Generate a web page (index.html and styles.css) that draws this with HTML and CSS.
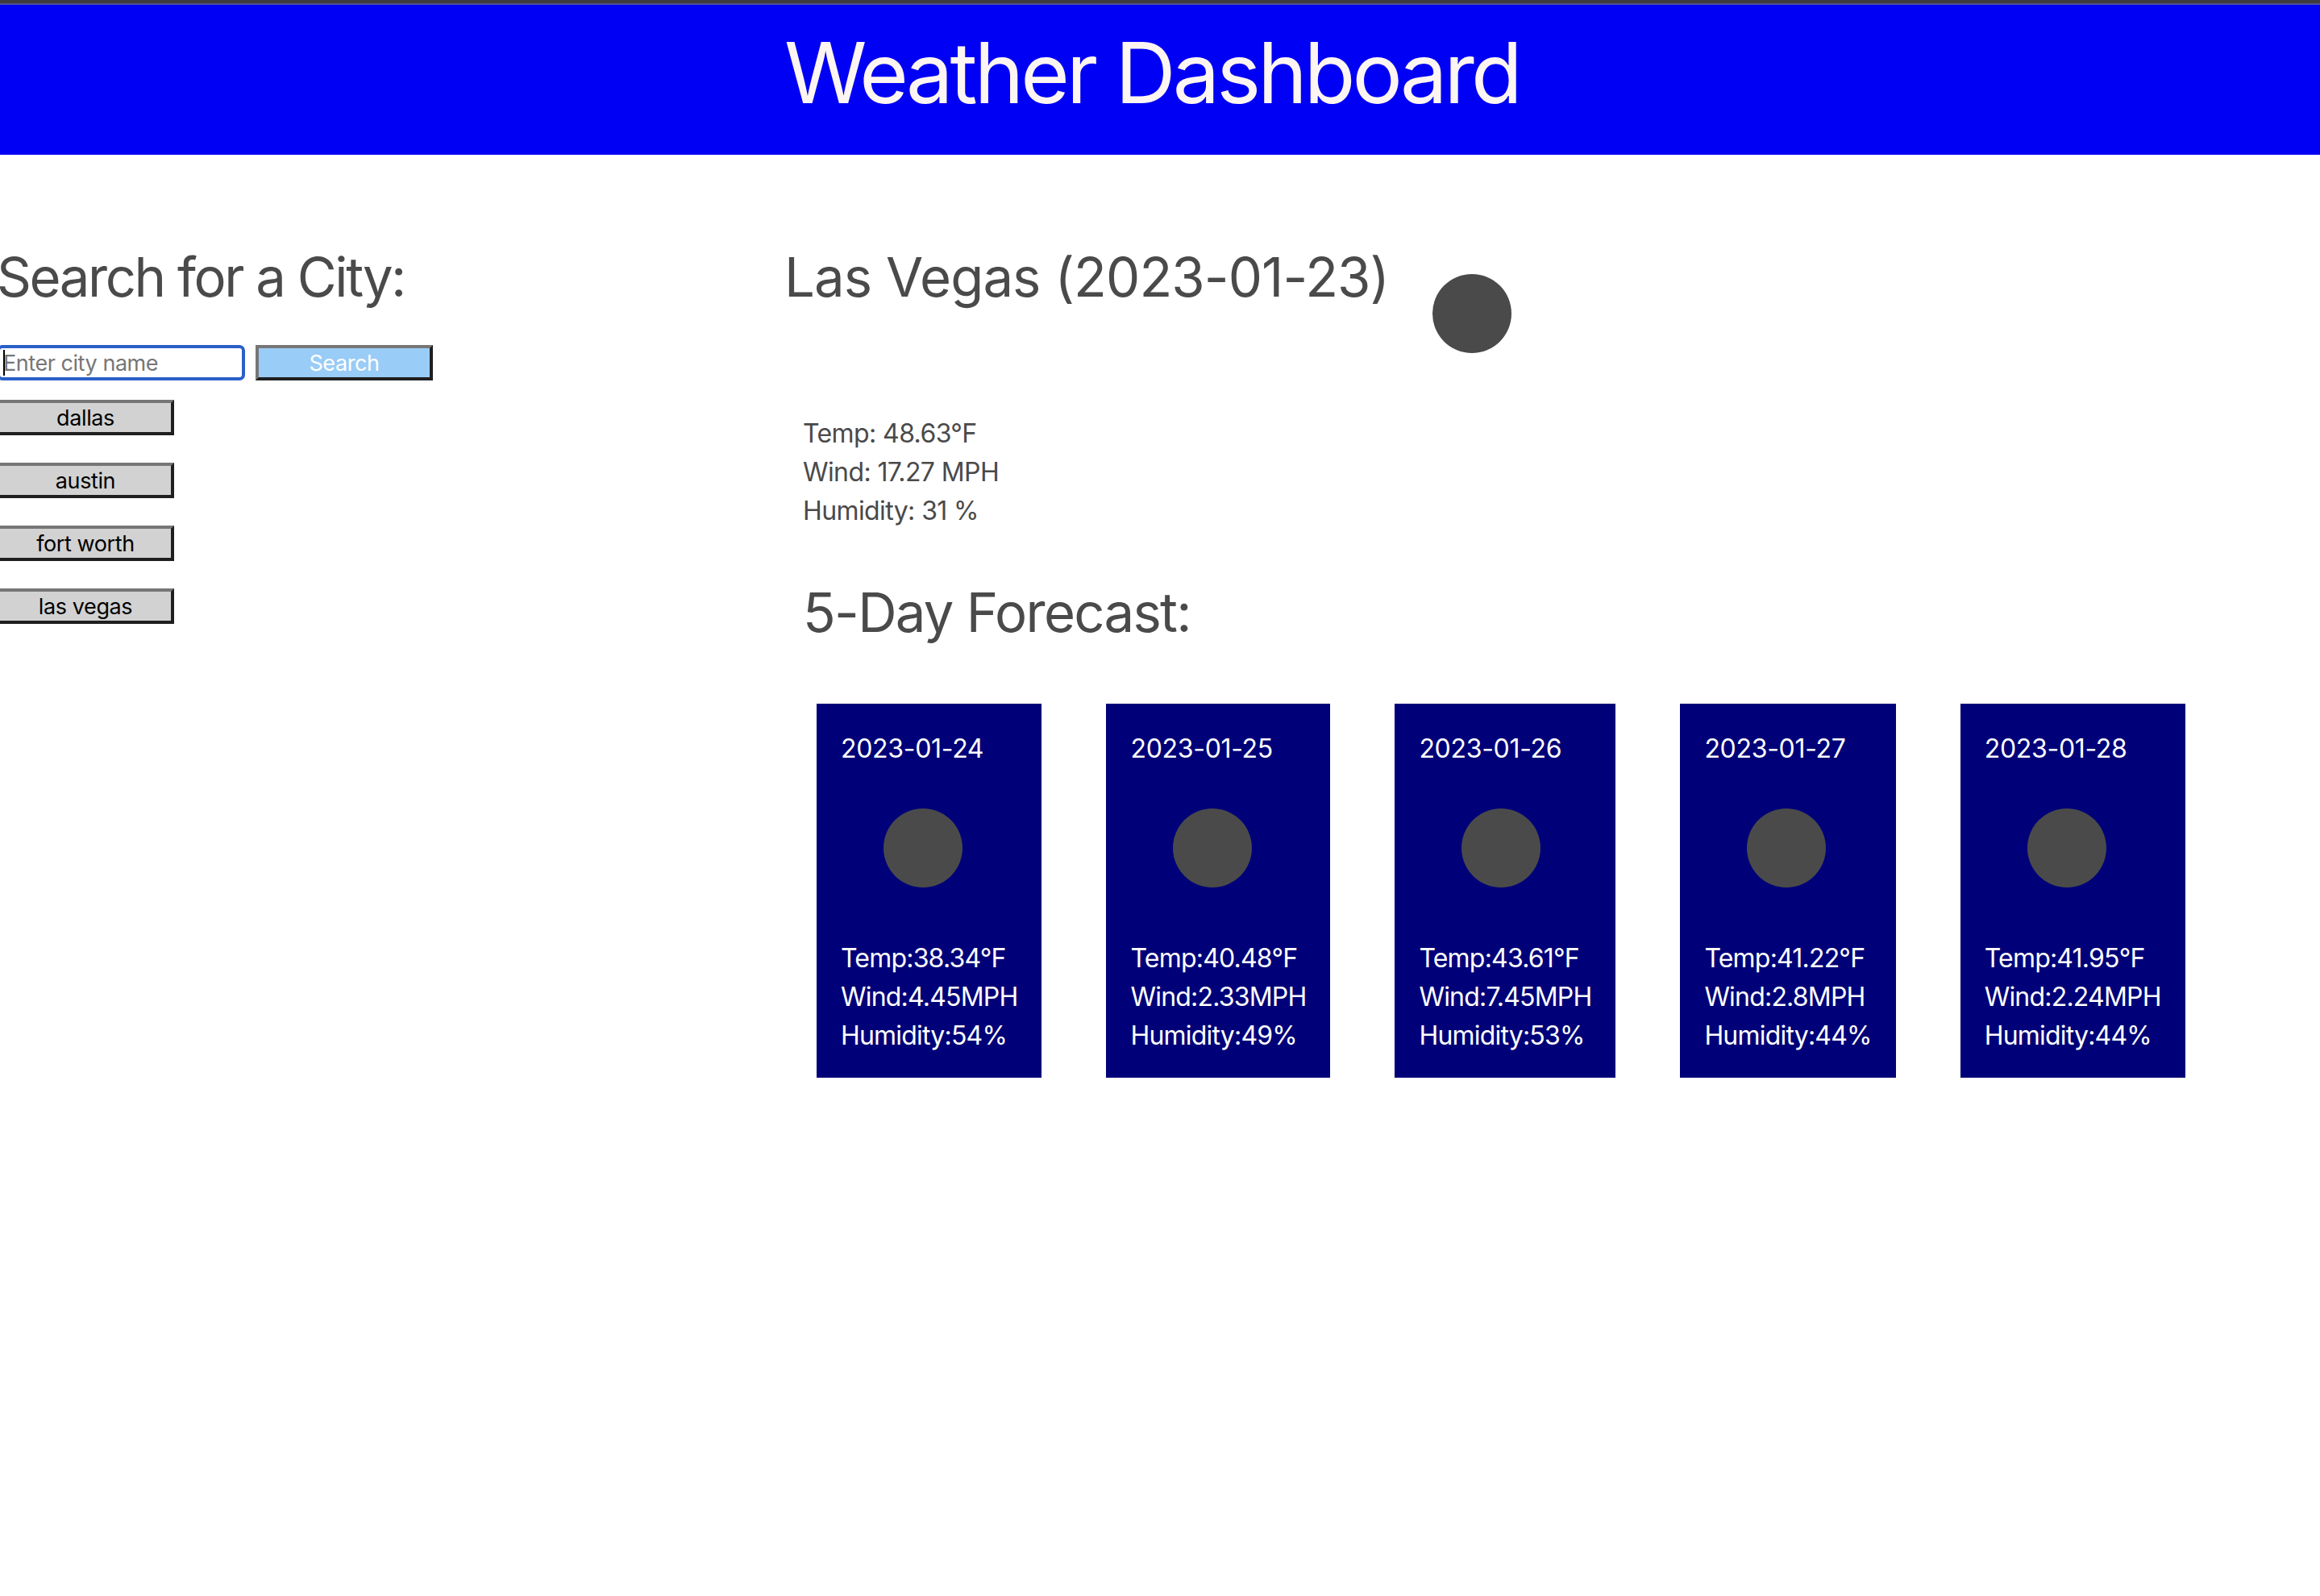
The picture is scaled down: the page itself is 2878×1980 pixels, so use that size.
FILE: index.html
```html
<!DOCTYPE html>
<html lang="en">
<head>
    <meta charset="UTF-8">
    <meta name="viewport" content="width=device-width, initial-scale=1.0">
    <title>Weather Dashboard</title>

    <link rel="stylesheet" href="styles.css">
</head>
<body>
    <header class="page-header">
        <h1>Weather Dashboard</h1>
    </header>

    <div class="layout">
        <aside class="sidebar">
            <h2 class="search-title">Search for a City:</h2>
            <form class="search-form">
                <div class="input-wrap">
                    <input type="text" class="city-input" placeholder="Enter city name">
                </div>
                <button type="button" class="search-btn">Search</button>
            </form>
            <div class="history">
                <button type="button" class="history-btn">dallas</button>
                <button type="button" class="history-btn">austin</button>
                <button type="button" class="history-btn">fort worth</button>
                <button type="button" class="history-btn">las vegas</button>
            </div>
        </aside>

        <main class="main">
            <div class="current-head">
                <h2 class="city-title">Las Vegas (2023-01-23)</h2>
                <div class="weather-icon"></div>
            </div>
            <div class="current-stats">
                <p>Temp: 48.63°F</p>
                <p>Wind: 17.27 MPH</p>
                <p>Humidity: 31 %</p>
            </div>
            <h2 class="forecast-title">5-Day Forecast:</h2>
            <div class="forecast">
                <div class="card">
                    <p class="card-date">2023-01-24</p>
                    <div class="weather-icon card-icon"></div>
                    <p>Temp:38.34°F</p>
                    <p>Wind:4.45MPH</p>
                    <p>Humidity:54%</p>
                </div>
                <div class="card">
                    <p class="card-date">2023-01-25</p>
                    <div class="weather-icon card-icon"></div>
                    <p>Temp:40.48°F</p>
                    <p>Wind:2.33MPH</p>
                    <p>Humidity:49%</p>
                </div>
                <div class="card">
                    <p class="card-date">2023-01-26</p>
                    <div class="weather-icon card-icon"></div>
                    <p>Temp:43.61°F</p>
                    <p>Wind:7.45MPH</p>
                    <p>Humidity:53%</p>
                </div>
                <div class="card">
                    <p class="card-date">2023-01-27</p>
                    <div class="weather-icon card-icon"></div>
                    <p>Temp:41.22°F</p>
                    <p>Wind:2.8MPH</p>
                    <p>Humidity:44%</p>
                </div>
                <div class="card">
                    <p class="card-date">2023-01-28</p>
                    <div class="weather-icon card-icon"></div>
                    <p>Temp:41.95°F</p>
                    <p>Wind:2.24MPH</p>
                    <p>Humidity:44%</p>
                </div>
            </div>
        </main>
    </div>
</body>
</html>
```

FILE: styles.css
```css
* {
    box-sizing: border-box;
}

body {
    font-family: 'Inter', 'Liberation Sans', sans-serif;
    background-color: #fff;
    color: #4a4a4a;
    margin: 0;
    padding: 0;
    font-size: 32px;
    line-height: 48px;
    min-height: 1980px;
    letter-spacing: -0.6px;
}

p {
    margin: 0;
}

h1, h2 {
    margin: 0;
    font-weight: 400;
}

h2 {
    font-size: 67px;
    line-height: 80px;
}

.page-header {
    height: 192px;
    border-top: 4px solid #3d3d3f;
    background-color: #0000f5;
    padding-left: 973px;
}

/* thin lighter line under the dark top edge */
.page-header::before {
    content: "";
    display: block;
    height: 2px;
    margin-left: -973px;
    background-color: #50508c;
}

.page-header h1 {
    font-size: 104px;
    line-height: 168px;
    letter-spacing: -3.9px;
    color: #fdf5f1;
}

.layout {
    display: flex;
}

.sidebar {
    width: 977px;
    margin-left: -4px;
    padding-top: 112px;
}

.search-title {
    letter-spacing: -2.45px;
}

.search-form {
    display: flex;
    gap: 13px;
    margin-top: 44px;
}

.input-wrap {
    position: relative;
}

/* text caret of the focused field */
.input-wrap::after {
    content: "";
    position: absolute;
    left: 8px;
    top: 6px;
    width: 2px;
    height: 32px;
    background-color: #000;
}

.city-input {
    display: block;
    width: 308px;
    height: 44px;
    padding: 0 4px;
    border: 4px solid #2a60c8;
    border-radius: 7px;
    outline: none;
    font-family: inherit;
    font-size: 27px;
    letter-spacing: -0.45px;
}

.city-input::placeholder {
    color: #767676;
}

.search-btn, .history-btn {
    width: 220px;
    height: 44px;
    padding: 2px 0 0;
    border-width: 4px;
    border-style: solid;
    border-color: #767676 #1f1f1f #1f1f1f #767676;
    font-family: inherit;
    font-size: 27px;
    line-height: 34px;
    letter-spacing: -0.4px;
}

.search-btn {
    background-color: #99ccf7;
    color: #fff;
}

.history {
    display: flex;
    flex-direction: column;
    align-items: flex-start;
    gap: 34px;
    margin-top: 24px;
}

.history-btn {
    background-color: #d2d2d2;
    color: #000;
}

.main {
    flex: 1;
    padding-top: 112px;
}

.current-head {
    display: flex;
    gap: 54px;
}

.city-title {
    letter-spacing: -0.9px;
}

.weather-icon {
    width: 98px;
    height: 98px;
    border-radius: 50%;
    background-color: #4a4a4a;
    margin-top: 36px;
}

.current-stats {
    margin-top: 76px;
    padding-left: 23px;
}

.forecast-title {
    margin-top: 62px;
    padding-left: 23px;
    letter-spacing: -1.7px;
}

.forecast {
    display: flex;
    gap: 80px;
    margin-top: 73px;
    padding-left: 40px;
}

.card {
    height: 464px;
    padding: 32px 30px 30px;
    background-color: #000078;
    color: #fff;
}

.card p {
    letter-spacing: -0.8px;
}

.card .card-date {
    letter-spacing: -0.3px;
}

.card-icon {
    margin: 50px 0 64px 53px;
}
```
